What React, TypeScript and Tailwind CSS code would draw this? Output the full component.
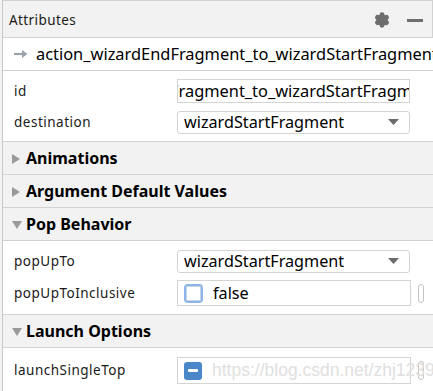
import { Settings } from 'lucide-react'

const FONT = { fontFamily: '"Noto Sans", "Open Sans", sans-serif' }

function Section({ title, open }: { title: string; open?: boolean }) {
  return (
    <div className="h-[33px] flex items-center bg-[#f2f2f2] border-b border-[#d2d2d2] pl-[8px]">
      {open ? (
        <svg width="12" height="10" viewBox="0 0 12 10" className="mr-[3px] mt-[1px]">
          <polygon points="1,1 11,1 6,9" fill="#9a9a9a" />
        </svg>
      ) : (
        <svg width="11" height="12" viewBox="0 0 11 12" className="mr-[4px] mt-[1px]">
          <polygon points="1,1 9,6 1,11" fill="#9a9a9a" />
        </svg>
      )}
      <span className="text-[16px] font-bold text-black">{title}</span>
    </div>
  )
}

function Dropdown({ value }: { value: string }) {
  return (
    <div className="w-[233px] h-[23px] rounded-[3px] border border-[#d4d4d4] bg-white flex items-center pl-[6px] pr-[10px]">
      <span className="flex-1 text-[16.2px] text-black leading-none">{value}</span>
      <svg width="11" height="7" viewBox="0 0 11 7">
        <polygon points="0,0 11,0 5.5,6" fill="#6b6b6b" />
      </svg>
    </div>
  )
}

function Row({ label, children }: { label: string; children: React.ReactNode }) {
  return (
    <div className="flex items-center">
      <div className="w-[174px] shrink-0 pl-[11px] text-[13.5px] text-[#1a1a1a] tracking-[0.5px]">{label}</div>
      {children}
    </div>
  )
}

export default function App() {
  return (
    <div className="w-[433px] h-[391px] overflow-hidden bg-[#f2f2f2] pl-[2px]" style={FONT}>
      <div className="h-full bg-white border-l border-[#c9c9c9]">
        {/* header */}
        <div className="h-[38px] flex items-center bg-[#f2f2f2] border-t border-b border-r border-[#d2d2d2] pl-[6px] pr-[9px]">
          <span className="flex-1 text-[13.5px] text-[#1a1a1a] mt-[3px] tracking-[0.4px]">Attributes</span>
          <Settings size={16} strokeWidth={3} className="text-[#6e6e6e] mr-[17px] mt-[2px]" fill="#6e6e6e" />
          <div className="w-[16px] h-[3px] bg-[#6e6e6e] mt-[2px]" />
        </div>

        {/* action name */}
        <div className="h-[33px] flex items-center border-b border-[#d2d2d2] pl-[11px] overflow-hidden whitespace-nowrap">
          <svg width="14" height="10" viewBox="0 0 14 10" className="mr-[8px] shrink-0">
            <path d="M0 5 H10" stroke="#9aa3ab" strokeWidth="2.2" />
            <polygon points="8,1 13.5,5 8,9" fill="#9aa3ab" />
          </svg>
          <span className="text-[16.4px] text-black">action_wizardEndFragment_to_wizardStartFragment</span>
        </div>

        {/* fields */}
        <div className="h-[71px] border-b border-[#d2d2d2] pt-[8px] flex flex-col gap-[8px]">
          <Row label="id">
            <div className="w-[233px] h-[24px] border border-[#d4d4d4] bg-white overflow-hidden whitespace-nowrap flex items-center">
              <span className="text-[16.4px] text-black ml-[-8px]">Fragment_to_wizardStartFragment</span>
            </div>
          </Row>
          <Row label="destination">
            <Dropdown value="wizardStartFragment" />
          </Row>
        </div>

        <Section title="Animations" />
        <Section title="Argument Default Values" />
        <Section title="Pop Behavior" open />

        <div className="h-[74px] border-b border-[#d2d2d2] pt-[9px] flex flex-col gap-[7px]">
          <Row label="popUpTo">
            <Dropdown value="wizardStartFragment" />
          </Row>
          <Row label="popUpToInclusive">
            <div className="w-[234px] h-[26px] border border-[#d4d4d4] bg-white flex items-center pl-[6px]">
              <div className="w-[19px] h-[19px] rounded-[4px] border-2 border-[#8cb4ea] bg-white flex items-center justify-center">
                <div className="w-[15px] h-[15px] rounded-[2px] border border-[#c8d4e4]" />
              </div>
              <span className="text-[16.2px] text-black ml-[10px]">false</span>
            </div>
            <div className="ml-[7px] w-[6px] h-[19px] rounded-full border border-[#c4c4c4]" />
          </Row>
        </div>

        <Section title="Launch Options" open />

        <div className="pt-[9px]">
          <Row label="launchSingleTop">
            <div className="relative w-[234px] h-[27px] border border-[#d4d4d4] bg-white flex items-center pl-[6px] whitespace-nowrap">
              <div className="w-[18px] h-[18px] rounded-[3px] bg-[#4a87c9] flex items-center justify-center shrink-0">
                <div className="w-[10px] h-[3px] bg-white rounded-[1px]" />
              </div>
              <span
                className="relative z-10 text-[17.5px] text-[#e0e0e0] ml-[10px]"
                style={{ fontFamily: '"Liberation Sans", Arial, sans-serif' }}
              >
                https://blog.csdn.net/zhj12399
              </span>
            </div>
            <div className="ml-[7px] w-[6px] h-[19px] rounded-full border border-[#c4c4c4]" />
          </Row>
        </div>
      </div>
    </div>
  )
}
